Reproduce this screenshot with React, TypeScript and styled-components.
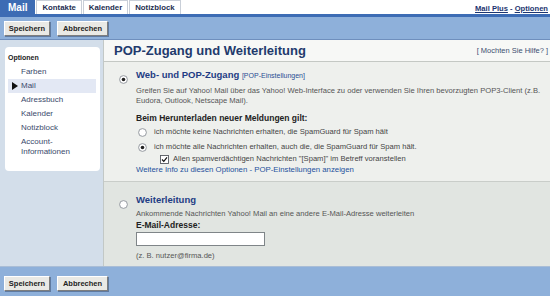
import React from "react";
import styled, { createGlobalStyle } from "styled-components";

const GlobalStyle = createGlobalStyle`
  html, body { margin: 0; padding: 0; }
  body { font-family: "Liberation Sans", Arial, sans-serif; background: #ffffff; width: 550px; height: 296px; overflow: hidden; }
  * { box-sizing: border-box; }
`;

const Page = styled.div`
  width: 550px;
  height: 296px;
  display: flex;
  flex-direction: column;
`;

const TabBar = styled.div`
  height: 14px;
  display: flex;
  align-items: flex-end;
  justify-content: space-between;
  background: #ffffff;
`;

const Tabs = styled.div`
  display: flex;
  gap: 1px;
  height: 14px;
`;

const Tab = styled.div<{ $active?: boolean }>`
  height: 14px;
  padding: 0 ${(p) => (p.$active ? 7 : 5)}px;
  display: flex;
  align-items: center;
  font-size: ${(p) => (p.$active ? 10 : 7.8)}px;
  font-weight: bold;
  color: ${(p) => (p.$active ? "#ffffff" : "#1c2d50")};
  background: ${(p) => (p.$active ? "#3d6cb4" : "#ffffff")};
  border: 1px solid ${(p) => (p.$active ? "#3d6cb4" : "#c9cfd8")};
  border-bottom: none;
`;

const TopLinks = styled.div`
  font-size: 7.6px;
  font-weight: bold;
  color: #1c3570;
  padding: 0 2px 1px 0;
  a { color: #1c3570; text-decoration: underline; }
`;

const Toolbar = styled.div<{ $bottom?: boolean }>`
  background: #8eb0da;
  display: flex;
  align-items: ${(p) => (p.$bottom ? "flex-start" : "center")};
  gap: 7px;
  padding: ${(p) => (p.$bottom ? "9px 0 0 4px" : "0 0 0 4px")};
  height: ${(p) => (p.$bottom ? 30 : 26)}px;
  border-top: ${(p) => (p.$bottom ? "1px solid #a9bdd6" : "3px solid #3d6cb4")};
  border-bottom: ${(p) => (p.$bottom ? "none" : "1px solid #6f8fbd")};
`;

const Button = styled.button<{ $w: number }>`
  width: ${(p) => p.$w}px;
  height: 15px;
  padding: 0;
  font-family: "Liberation Sans", Arial, sans-serif;
  font-size: 7.5px;
  font-weight: bold;
  color: #222222;
  background: #e9e9e5;
  border: 1px solid;
  border-color: #ffffff #7d7d7d #7d7d7d #ffffff;
  box-shadow: 1px 1px 0 #5f7aa0;
`;

const Main = styled.div`
  flex: 1;
  display: grid;
  grid-template-columns: 103px 1fr;
  min-height: 0;
`;

const SideColumn = styled.div`
  background: #d3deea;
  padding: 7px 3px 0 5px;
`;

const SidePanel = styled.div`
  background: #ffffff;
  border-radius: 4px;
  padding: 5px 4px 12px 3px;
`;

const SideTitle = styled.div`
  font-size: 7px;
  font-weight: bold;
  color: #222222;
  height: 11px;
  line-height: 11px;
  margin-bottom: 2px;
`;

const SideItem = styled.div<{ $active?: boolean }>`
  position: relative;
  font-size: 8px;
  color: #3b4a6b;
  padding: 2px 0 2px 13px;
  line-height: 10px;
  background: ${(p) => (p.$active ? "#e3e8f4" : "transparent")};
`;

const Arrow = styled.span`
  position: absolute;
  left: 4px;
  top: 3px;
  width: 0;
  height: 0;
  border-top: 4px solid transparent;
  border-bottom: 4px solid transparent;
  border-left: 6px solid #111111;
`;

const Content = styled.div`
  border-left: 1px solid #c2c8c6;
  display: flex;
  flex-direction: column;
  min-height: 0;
`;

const Header = styled.div`
  height: 22px;
  background: #f7f8f6;
  border-bottom: 1px solid #c4c8c4;
  display: flex;
  align-items: center;
  justify-content: space-between;
  padding: 0 2px 1px 10px;
`;

const Title = styled.div`
  font-size: 13px;
  font-weight: bold;
  color: #223a6c;
`;

const Help = styled.div`
  font-size: 7.5px;
  color: #3d4f70;
`;

const Section = styled.div<{ $dark?: boolean }>`
  background: ${(p) => (p.$dark ? "#e1e5e1" : "#eef0ed")};
  border-bottom: ${(p) => (p.$dark ? "none" : "1px solid #c9cdc9")};
  padding: ${(p) => (p.$dark ? "11px 0 0 15px" : "6px 0 0 15px")};
  height: ${(p) => (p.$dark ? "auto" : "120px")};
  flex: ${(p) => (p.$dark ? 1 : "none")};
  display: grid;
  grid-template-columns: 17px 1fr;
  align-content: start;
`;

const RadioIcon = ({ on }: { on?: boolean }) => (
  <svg width="9" height="9" viewBox="0 0 9 9">
    <circle cx="4.5" cy="4.5" r="3.9" fill="#ffffff" stroke="#8a8f96" strokeWidth="0.9" />
    {on && <circle cx="4.5" cy="4.5" r="1.8" fill="#222222" />}
  </svg>
);

const CheckIcon = () => (
  <svg width="9" height="9" viewBox="0 0 9 9">
    <rect x="0.5" y="0.5" width="8" height="8" fill="#ffffff" stroke="#555a60" strokeWidth="0.9" />
    <path d="M2 4.5 L3.8 6.4 L7 2.4" fill="none" stroke="#111111" strokeWidth="1.2" />
  </svg>
);

const IconCell = styled.div`
  padding-top: 2px;
`;

const Body = styled.div`
  display: flex;
  flex-direction: column;
`;

const SectionTitle = styled.div`
  font-size: 9.5px;
  font-weight: bold;
  color: #1e3c84;
  line-height: 13px;
  span { font-size: 7px; font-weight: normal; color: #2a4d93; }
`;

const Desc = styled.div<{ $mt: number }>`
  font-size: 7.6px;
  color: #555555;
  line-height: 10px;
  margin-top: ${(p) => p.$mt}px;
`;

const Label = styled.div<{ $mt: number }>`
  font-size: 8.5px;
  font-weight: bold;
  color: #222222;
  line-height: 11px;
  margin-top: ${(p) => p.$mt}px;
`;

const Option = styled.div<{ $indent: number; $mt: number; $gap: number }>`
  display: flex;
  align-items: center;
  gap: ${(p) => p.$gap}px;
  padding-left: ${(p) => p.$indent}px;
  margin-top: ${(p) => p.$mt}px;
  font-size: 7.6px;
  color: #444444;
  line-height: 10px;
`;

const LinkLine = styled.div`
  font-size: 7.8px;
  color: #24509c;
  line-height: 11px;
  margin-top: 0;
`;

const Input = styled.input`
  width: 129px;
  height: 14px;
  margin-top: 1px;
  border: 1px solid #7f8588;
  background: #ffffff;
  padding: 0;
`;

const Hint = styled.div`
  font-size: 7.6px;
  color: #555555;
  line-height: 10px;
  margin-top: 5px;
`;

export default function App() {
  return (
    <Page>
      <GlobalStyle />
      <TabBar>
        <Tabs>
          <Tab $active>Mail</Tab>
          <Tab>Kontakte</Tab>
          <Tab>Kalender</Tab>
          <Tab>Notizblock</Tab>
        </Tabs>
        <TopLinks>
          <a>Mail Plus</a> - <a>Optionen</a>
        </TopLinks>
      </TabBar>
      <Toolbar>
        <Button $w={46}>Speichern</Button>
        <Button $w={51}>Abbrechen</Button>
      </Toolbar>
      <Main>
        <SideColumn>
          <SidePanel>
            <SideTitle>Optionen</SideTitle>
            <SideItem>Farben</SideItem>
            <SideItem $active>
              <Arrow />
              Mail
            </SideItem>
            <SideItem>Adressbuch</SideItem>
            <SideItem>Kalender</SideItem>
            <SideItem>Notizblock</SideItem>
            <SideItem>
              Account-
              <br />
              Informationen
            </SideItem>
          </SidePanel>
        </SideColumn>
        <Content>
          <Header>
            <Title>POP-Zugang und Weiterleitung</Title>
            <Help>[ Mochten Sie Hilfe? ]</Help>
          </Header>
          <Section>
            <IconCell>
              <RadioIcon on />
            </IconCell>
            <Body>
              <SectionTitle>
                Web- und POP-Zugang <span>[POP-Einstellungen]</span>
              </SectionTitle>
              <Desc $mt={4}>
                Greifen Sie auf Yahoo! Mail über das Yahoo! Web-Interface zu oder verwenden Sie Ihren bevorzugten POP3-Client (z.B.
                <br />
                Eudora, Outlook, Netscape Mail).
              </Desc>
              <Label $mt={7}>Beim Herunterladen neuer Meldungen gilt:</Label>
              <Option $indent={2} $gap={7} $mt={3}>
                <RadioIcon />
                ich möchte keine Nachrichten erhalten, die SpamGuard für Spam hält
              </Option>
              <Option $indent={2} $gap={7} $mt={5}>
                <RadioIcon on />
                ich möchte alle Nachrichten erhalten, auch die, die SpamGuard für Spam hält.
              </Option>
              <Option $indent={24} $gap={4} $mt={2}>
                <CheckIcon />
                Allen spamverdächtigen Nachrichten "[Spam]" im Betreff voranstellen
              </Option>
              <LinkLine>Weitere Info zu diesen Optionen - POP-Einstellungen anzeigen</LinkLine>
            </Body>
          </Section>
          <Section $dark>
            <IconCell>
              <RadioIcon />
            </IconCell>
            <Body>
              <SectionTitle>Weiterleitung</SectionTitle>
              <Desc $mt={3}>Ankommende Nachrichten Yahoo! Mail an eine andere E-Mail-Adresse weiterleiten</Desc>
              <Label $mt={1}>E-Mail-Adresse:</Label>
              <Input />
              <Hint>(z. B. nutzer@firma.de)</Hint>
            </Body>
          </Section>
        </Content>
      </Main>
      <Toolbar $bottom>
        <Button $w={46}>Speichern</Button>
        <Button $w={51}>Abbrechen</Button>
      </Toolbar>
    </Page>
  );
}
